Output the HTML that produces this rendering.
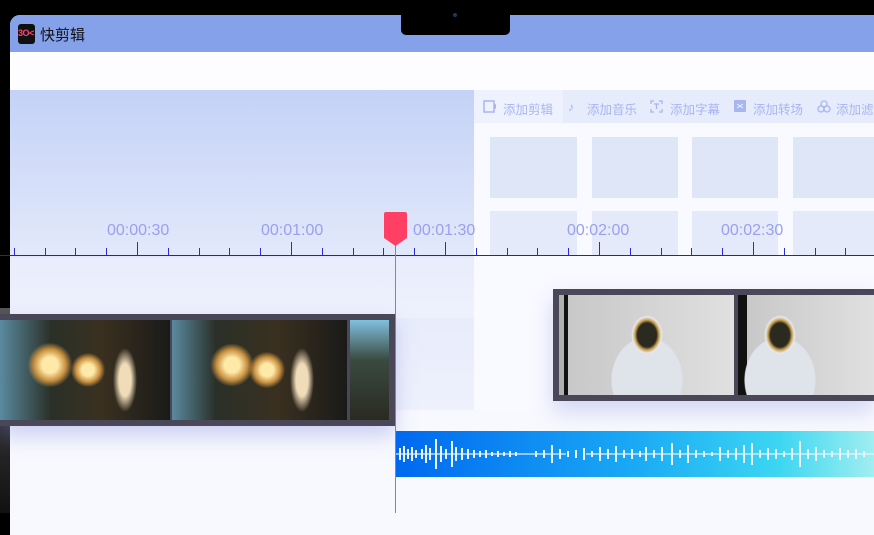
<!DOCTYPE html>
<html><head><meta charset="utf-8"><style>
*{margin:0;padding:0;box-sizing:border-box}
body{width:874px;height:513px;overflow:hidden;background:#000;position:relative;font-family:"Liberation Sans","Noto Sans CJK SC",sans-serif}
.abs{position:absolute}
#screen{left:10px;top:15px;width:880px;height:520px;background:#f8f9fe;border-radius:10px 0 0 0;overflow:hidden}
.tl{font-size:16px;color:#9aa0f0;position:absolute;top:222px}
.tick{position:absolute;width:1px;background:#2a2ad8}
.tab{position:absolute;top:99px;font-size:12.5px;color:#a8b6f0}
.ic{position:absolute;top:100px;font-size:12px;color:#a8b6f0}
.cell{position:absolute;background:#dfe6f8}
</style></head><body>
<div id="screen" class="abs"></div>
<div class="abs" style="left:0;top:308px;width:10px;height:205px;background:linear-gradient(#555,#111)"></div>
<div class="abs" style="left:10px;top:15px;width:864px;height:37px;background:#85a1ea;border-radius:10px 0 0 0"></div>
<div class="abs" style="left:401px;top:12px;width:109px;height:23px;background:#000;border-radius:0 0 5px 5px"></div>
<div class="abs" style="left:453px;top:13px;width:4px;height:4px;border-radius:50%;background:#1b3b5a"></div>
<div class="abs" style="left:18px;top:24px;width:17px;height:20px;background:#111;border-radius:3px"></div>
<div class="abs" style="left:18px;top:28px;font-size:9px;color:#f47;font-weight:bold;letter-spacing:-0.5px">3O&lt;</div>
<div class="abs" style="left:40px;top:24px;font-size:15px;color:#111">快剪辑</div>
<div class="abs" style="left:10px;top:52px;width:864px;height:38px;background:#fdfdff"></div>
<div class="abs" style="left:10px;top:90px;width:464px;height:320px;background:linear-gradient(#c4d2f7,#e4eafb 55%,#eef1fc)"></div>
<div class="abs" style="left:474px;top:90px;width:400px;height:320px;background:#f9faff"></div>
<div class="abs" style="left:474px;top:90px;width:400px;height:33px;background:#e6ecfc"></div>
<div class="abs" style="left:474px;top:90px;width:89px;height:33px;background:#eef2fe"></div>
<svg class="abs" style="left:483px;top:100px" width="14" height="13"><rect x="1" y="1" width="10" height="11" fill="none" stroke="#a8b6f0" stroke-width="1.5"/><path d="M11 5L13 4V9L11 8" fill="#a8b6f0"/></svg>
<div class="tab" style="left:503px">添加剪辑</div>
<div class="ic" style="left:568px">♪</div><div class="tab" style="left:587px">添加音乐</div>
<svg class="abs" style="left:650px;top:100px" width="13" height="13"><path d="M1 4V1H4M9 1H12V4M12 9V12H9M4 12H1V9M4 4H9M6.5 4V9" fill="none" stroke="#a8b6f0" stroke-width="1.3"/></svg>
<div class="tab" style="left:670px">添加字幕</div>
<svg class="abs" style="left:734px;top:100px" width="13" height="13"><rect x="0" y="0" width="12" height="12" rx="1" fill="#a8b6f0"/><path d="M3 4L6 6L3 8M9 4L6 6L9 8" stroke="#eef2fe" fill="none"/></svg>
<div class="tab" style="left:753px">添加转场</div>
<svg class="abs" style="left:817px;top:100px" width="14" height="13"><circle cx="7" cy="4" r="3" fill="none" stroke="#a8b6f0" stroke-width="1.3"/><circle cx="4" cy="9" r="3" fill="none" stroke="#a8b6f0" stroke-width="1.3"/><circle cx="10" cy="9" r="3" fill="none" stroke="#a8b6f0" stroke-width="1.3"/></svg>
<div class="tab" style="left:836px">添加滤</div>
<div class="cell" style="left:490px;top:137px;width:87px;height:61px"></div>
<div class="cell" style="left:592px;top:137px;width:86px;height:61px"></div>
<div class="cell" style="left:692px;top:137px;width:86px;height:61px"></div>
<div class="cell" style="left:793px;top:137px;width:81px;height:61px"></div>
<div class="cell" style="left:490px;top:211px;width:87px;height:45px;background:#e4eafa"></div>
<div class="cell" style="left:592px;top:211px;width:86px;height:45px;background:#e4eafa"></div>
<div class="cell" style="left:692px;top:211px;width:86px;height:45px;background:#e4eafa"></div>
<div class="cell" style="left:793px;top:211px;width:81px;height:45px;background:#e4eafa"></div>
<div class="abs" style="left:10px;top:258px;width:464px;height:60px;background:linear-gradient(#e9edfc,#eef1fd)"></div>
<div class="tl" style="left:107px">00:00:30</div>
<div class="tl" style="left:261px">00:01:00</div>
<div class="tl" style="left:413px">00:01:30</div>
<div class="tl" style="left:567px">00:02:00</div>
<div class="tl" style="left:721px">00:02:30</div>
<div class="abs" style="left:0;top:255px;width:874px;height:1px;background:#2020d0"></div>
<div id="ticks"></div>
<script>
var s='';
for(var i=-5;i<30;i++){var x=Math.round(137+i*30.8);if(x<5||x>873)continue;var big=(i%5===0);s+='<div class="tick" style="left:'+x+'px;top:'+(big?242:248)+'px;height:'+(big?13:7)+'px"></div>';}
document.getElementById('ticks').innerHTML=s;
</script>
<div class="abs" style="left:395px;top:240px;width:1px;height:273px;background:#ff4f7a"></div>
<svg class="abs" style="left:383px;top:212px" width="25" height="35"><path d="M3 0H22Q24 0 24 2V26L12.5 34L1 26V2Q1 0 3 0Z" fill="#ff3f63"/></svg>
<div class="abs" style="left:0;top:314px;width:395px;height:112px;background:#4a4858;box-shadow:0 10px 20px rgba(120,130,220,.35)"></div>
<div class="abs" style="left:0;top:320px;width:170px;height:100px;background:radial-gradient(circle at 50px 45px,#ffe9a8 6%,#c89040 12%,transparent 17%),radial-gradient(circle at 88px 50px,#ffe9a8 6%,#c89040 12%,transparent 17%),radial-gradient(ellipse 15px 40px at 125px 60px,#f0dcb8 40%,transparent 80%),linear-gradient(90deg,#5a8aa0,#2a3028 30%,#3a3020 60%,#1a1a18)"></div>
<div class="abs" style="left:172px;top:320px;width:175px;height:100px;background:radial-gradient(circle at 60px 45px,#ffe9a8 6%,#c89040 12%,transparent 17%),radial-gradient(circle at 95px 50px,#ffe9a8 6%,#c89040 12%,transparent 17%),radial-gradient(ellipse 15px 40px at 130px 60px,#f0dcb8 40%,transparent 80%),linear-gradient(90deg,#5a8aa0,#2a3028 25%,#3a3020 60%,#1a1a18)"></div>
<div class="abs" style="left:350px;top:320px;width:39px;height:100px;background:linear-gradient(#80c0e0,#3a4a40 40%,#2a2a20)"></div>
<div class="abs" style="left:553px;top:289px;width:321px;height:112px;background:#4a4858;box-shadow:0 10px 20px rgba(120,130,220,.3)"></div>
<div class="abs" style="left:559px;top:295px;width:175px;height:100px;background:radial-gradient(ellipse 16px 20px at 88px 40px,#2a2a20 60%,#c9a050 75%,#e8e8e8 90%,transparent 100%),radial-gradient(ellipse 50px 60px at 88px 85px,#dfe3ea 70%,transparent 72%),linear-gradient(90deg,#b0b0b0 0,#b0b0b0 5px,#111 5px,#111 9px,#c8c8c8 9px,#e0e0e0)"></div>
<div class="abs" style="left:738px;top:295px;width:136px;height:100px;background:radial-gradient(ellipse 16px 20px at 42px 40px,#2a2a20 60%,#c9a050 75%,#e8e8e8 90%,transparent 100%),radial-gradient(ellipse 50px 60px at 42px 85px,#dfe3ea 70%,transparent 72%),linear-gradient(90deg,#111 0,#111 9px,#c8c8c8 9px,#e0e0e0)"></div>
<div class="abs" style="left:396px;top:431px;width:478px;height:46px;background:linear-gradient(90deg,#0068f0,#1aaaf5 50%,#3cd6f2 80%,#a0eef0)"></div>
<svg class="abs" style="left:396px;top:431px" width="478" height="46"><g stroke="#e8f4ff" stroke-width="2">
<path d="M0 23H170M190 23H478" stroke-width="1.5" opacity=".8"/>
<path d="M4 17V29M8 15V31M12 18V28M16 16V30M20 19V27M26 18V28M30 14V32M34 17V29M40 8V38M45 15V31M50 18V28M56 10V36M60 16V30M66 17V29M72 18V28M78 19V27M84 20V26M90 19V27M96 21V25M102 20V26M108 21V25M114 20V26M120 21V25M140 20V26M148 19V27M156 14V32M164 18V28M172 20V26M180 19V27M188 17V29M196 20V26M204 16V30M212 18V28M220 15V31M228 19V27M236 18V28M244 20V26M250 16V30M258 19V27M266 16V30M276 12V34M284 19V27M292 14V32M300 19V27M308 20V26M316 21V25M324 16V30M332 19V27M340 17V29M348 14V32M356 12V34M364 19V27M372 17V29M380 18V28M388 20V26M396 17V29M404 10V36M412 18V28M420 16V30M428 19V27M436 20V26M444 17V29M452 19V27M460 18V28M468 20V26"/>
</g></svg>
</body></html>
